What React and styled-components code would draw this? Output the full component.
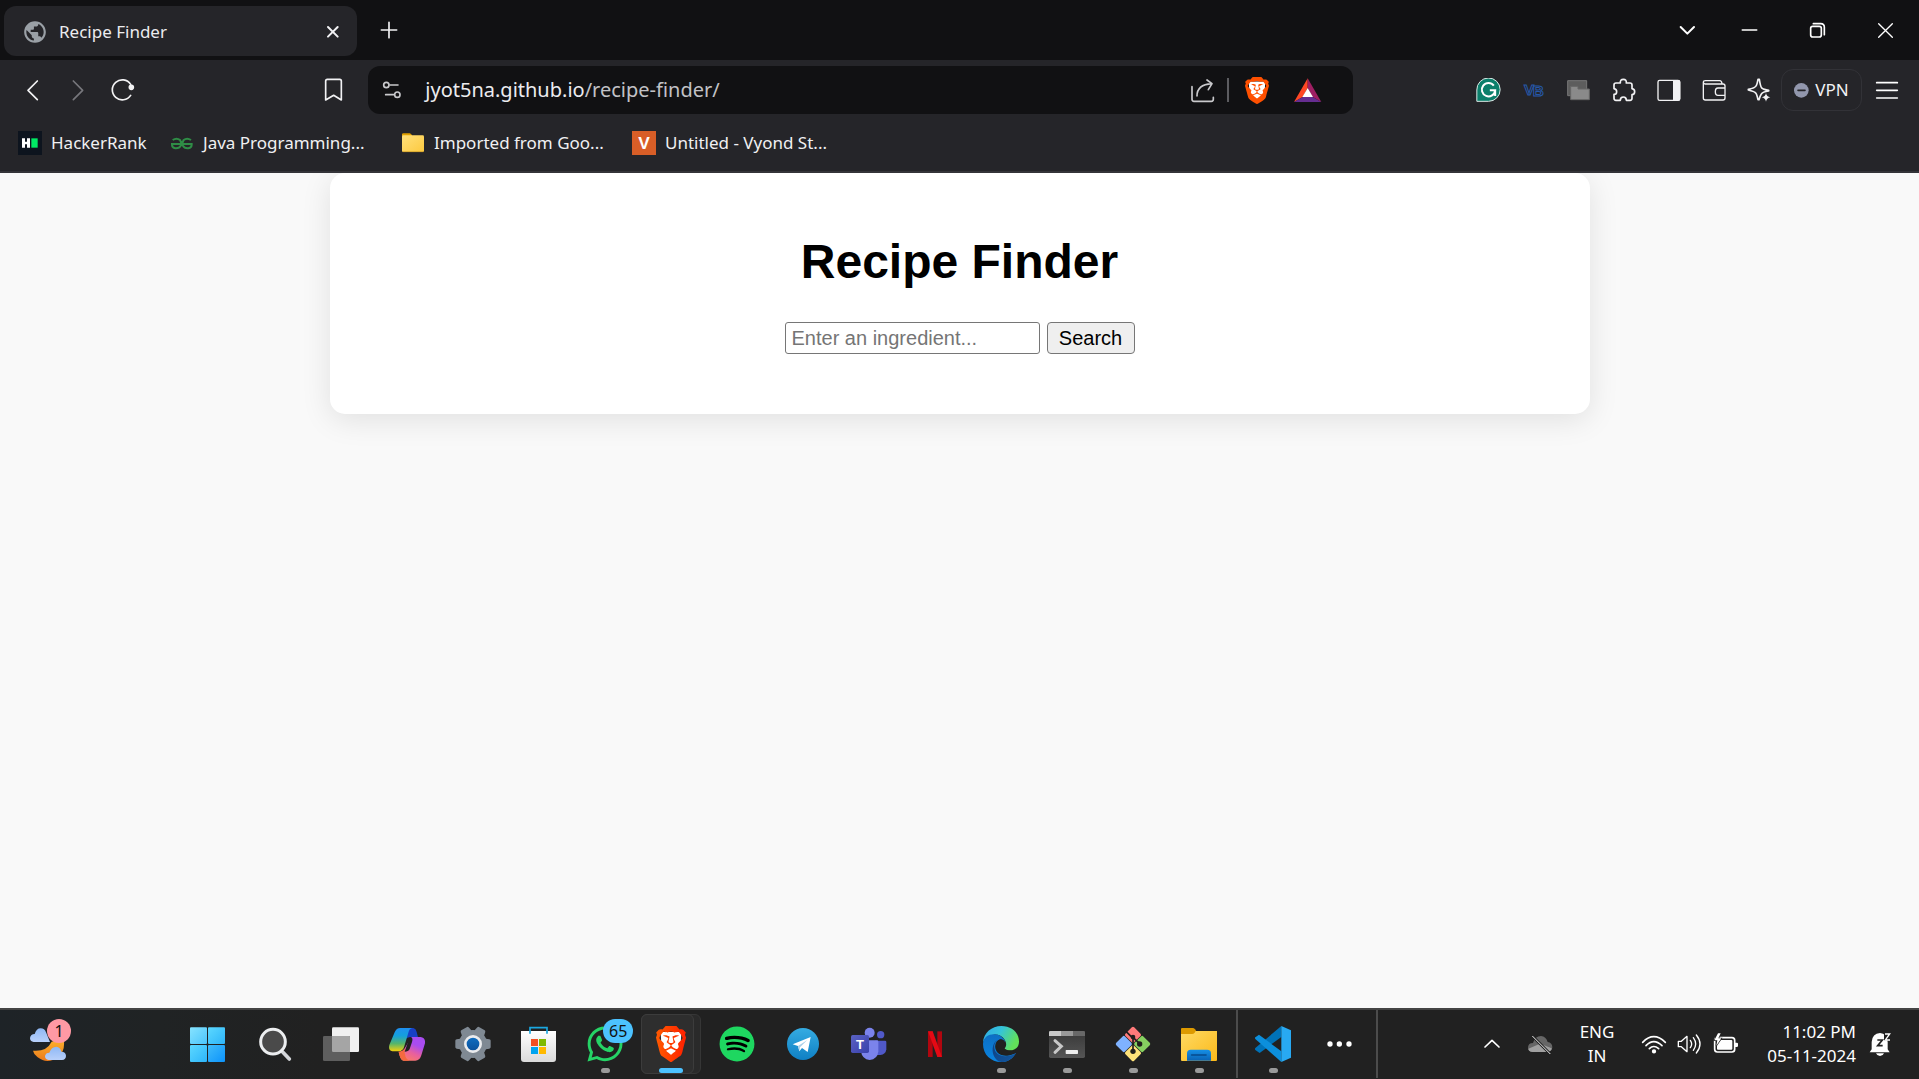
import React from "react";
import styled, { createGlobalStyle, css } from "styled-components";
import { MdPublic } from "react-icons/md";
import { SiBrave } from "react-icons/si";
import { FaSpotify, FaWhatsapp } from "react-icons/fa";

const ui = `"Noto Sans", "Open Sans", sans-serif`;
const arial = `"Liberation Sans", Arial, sans-serif`;

const GlobalStyle = createGlobalStyle`
  *, *::before, *::after { box-sizing: border-box; }
  body { margin: 0; background: #f9f9f9; }
  button, input { font: inherit; margin: 0; }
  svg { display: block; flex: none; }
`;

const Screen = styled.div`
  display: flex;
  flex-direction: column;
  min-height: 100vh;
  font-family: ${ui};
`;

const Plain = css`
  border: 0;
  padding: 0;
  background: none;
  color: #f2f2f4;
  display: flex;
  align-items: center;
  justify-content: center;
  flex: none;
`;

/* ---------- browser chrome ---------- */

const TabStrip = styled.div`
  display: flex;
  height: 60px;
  padding: 6px 0 4px 4px;
  background: #111113;
`;

const Tab = styled.div`
  display: flex;
  align-items: center;
  gap: 13px;
  width: 353px;
  padding: 1px 12px 0 20px;
  border-radius: 12px;
  background: #252529;
  color: #ececef;
  font-size: 17px;
  line-height: 24px;
`;

const TabTitle = styled.span`
  flex: 1;
  white-space: nowrap;
`;

const SlotButton = styled.button`
  ${Plain}
  width: ${(p) => p.$w || 45}px;
  height: ${(p) => p.$h || 48}px;
`;

const Push = styled.div`
  flex: ${(p) => p.$grow || 1};
`;

const Toolbar = styled.div`
  display: flex;
  align-items: center;
  height: 60px;
  padding: 0 8px 0 10px;
  background: #252529;
`;

const AddressBar = styled.div`
  display: flex;
  align-items: center;
  flex: 962;
  height: 48px;
  margin-left: 12px;
  padding-right: 21px;
  border-radius: 12px;
  background: #111113;
`;

const Address = styled.a`
  flex: 1;
  margin-left: 9px;
  color: #c2c2c6;
  font-size: 20px;
  line-height: 26px;
  text-decoration: none;
  white-space: nowrap;
`;

const Host = styled.span`
  color: #ececef;
`;

const BarDivider = styled.div`
  width: 2px;
  height: 24px;
  background: #5c5c60;
`;

const VpnButton = styled.button`
  ${Plain}
  gap: 6px;
  width: 81px;
  height: 42px;
  border: 1px solid #323237;
  border-radius: 12px;
  font-size: 17px;
  line-height: 24px;
`;

const Bookmarks = styled.nav`
  display: flex;
  gap: 23px;
  height: 53px;
  padding: 11px 18px 0;
  border-bottom: 2px solid #343439;
  background: #252529;
`;

const Bookmark = styled.a`
  display: flex;
  align-items: center;
  gap: 9px;
  height: 24px;
  width: ${(p) => (p.$wide ? 208 : 129)}px;
  color: #f0f0f2;
  font-size: 17px;
  line-height: 24px;
  text-decoration: none;
  white-space: nowrap;
`;

/* ---------- page ---------- */

const Page = styled.main`
  flex: 1;
  overflow: hidden;
  background: #f9f9f9;
  font-family: ${arial};
`;

const Card = styled.section`
  max-width: 1260px;
  margin: 0 auto;
  padding: 30px 30px 60px;
  border-radius: 15px;
  background: #fff;
  box-shadow: 0 6px 30px rgba(0, 0, 0, 0.1);
  text-align: center;
`;

const Title = styled.h1`
  margin: 31px 0 33px;
  color: #000;
  font-size: 48px;
  font-weight: 700;
  line-height: 55px;
`;

const SearchForm = styled.form`
  display: flex;
  justify-content: center;
  gap: 7px;
`;

const SearchInput = styled.input`
  width: 255px;
  height: 32px;
  padding: 0 6px;
  border: 1px solid #767676;
  border-radius: 3px;
  background: #fff;
  font-size: 20px;
  &::placeholder { color: #757575; opacity: 1; }
`;

const SearchButton = styled.button`
  width: 88px;
  height: 32px;
  padding: 0;
  border: 1px solid #767676;
  border-radius: 4px;
  background: #efefef;
  color: #000;
  font-size: 20px;
`;

/* ---------- taskbar ---------- */

const Taskbar = styled.footer`
  display: flex;
  align-items: stretch;
  height: 71px;
  padding: 0 15px 1px 0;
  border-top: 2px solid #444;
  background: linear-gradient(90deg, #1e2327 0, #202324 160px, #212121 320px);
`;

const TaskButton = styled.button`
  ${Plain}
  position: relative;
  width: ${(p) => p.$w || 66}px;
`;

const Weather = styled(TaskButton)`
  justify-content: flex-start;
  padding-left: 30px;
  width: 172px;
`;

const ActiveTile = styled.span`
  position: relative;
  display: flex;
  align-items: center;
  justify-content: center;
  width: 60px;
  height: 60px;
  border: 1px solid #363636;
  border-radius: 6px;
  background: #2a2a2a;

  &::before {
    content: "";
    position: absolute;
    inset: -1px 6px -1px -1px;
    border: 1px solid #3c3c3c;
    border-radius: 6px;
    background: #2e2e2e;
  }

  svg { position: relative; }
`;

const Running = styled.i`
  position: absolute;
  bottom: 5px;
  left: 50%;
  width: ${(p) => (p.$active ? 24 : 9)}px;
  height: 5px;
  margin-left: ${(p) => (p.$active ? -12 : -4)}px;
  border-radius: 3px;
  background: ${(p) => (p.$active ? "#4cc2ff" : "#9a9a9a")};
`;

const Badge = styled.span`
  position: absolute;
  top: 9px;
  left: ${(p) => p.$left}px;
  min-width: 24px;
  padding: 0 6px;
  border-radius: 12px;
  background: ${(p) => p.$bg};
  color: #111;
  font-size: 16px;
  line-height: 24px;
`;

const TaskDivider = styled.div`
  width: 2px;
  margin: 0 2px 0 4px;
  background: #4c4c4c;
`;

const TrayText = styled.button`
  ${Plain}
  flex-direction: column;
  align-items: ${(p) => (p.$end ? "flex-end" : "center")};
  width: ${(p) => p.$w}px;
  color: #fff;
  font-size: 17px;
  line-height: 24px;
  white-space: nowrap;
`;

/* ---------- drawings ---------- */

/* The drawings use a grid three times finer than the screen. */
const Draw = ({ box, children, ...rest }) => {
  const [, , w, h] = box;
  return (
    <svg width={Math.round(w / 3)} height={Math.round(h / 3)} viewBox={box.join(" ")} fill="none" aria-hidden="true" {...rest}>
      {children}
    </svg>
  );
};

const Line = ({ box, d, w = 5, c = "#f2f2f4", children }) => (
  <Draw box={box} stroke={c} strokeWidth={w} strokeLinecap="round" strokeLinejoin="round">
    <path d={d} />
    {children}
  </Draw>
);

const Gradient = ({ id, stops, x2 = 0, y2 = 1 }) => (
  <linearGradient id={id} x1="0" y1="0" x2={x2} y2={y2}>
    {stops.map((s, i) => (
      <stop key={i} offset={i / (stops.length - 1)} stopColor={s} />
    ))}
  </linearGradient>
);

const BraveLion = ({ size, width, id, colors }) => (
  <svg width={width} height={size} viewBox="1.8 0 20.4 24" preserveAspectRatio="none" aria-hidden="true">
    <defs><Gradient id={id} stops={colors} x2={1} y2={0} /></defs>
    <path d="M5 4 L19 4 L18.5 14 L12 20 L5.500 14Z" fill="#fff" />
    <SiBrave x="0" y="0" size={24} style={{ fill: `url(#${id})` }} />
  </svg>
);

const HackerRankIcon = () => (
  <Draw box={[54, 393, 72, 72]}>
    <path d="M54 393h72v72H54z" fill="#0d141e" />
    <path d="M66 415h9v10h6v-10h9v28h-9v-10h-6v10h-9z" fill="#fff" />
    <path d="M94 415h19v28H94z" fill="#00ea64" />
  </Draw>
);

const GeeksIcon = () => (
  <Draw box={[510, 393, 72, 72]} stroke="#2f8d46" strokeWidth="6">
    <path d="M513 432H578M518 420Q530 412 540 420Q545 426 543 436Q538 446 526 445Q516 443 516 434M573 420Q561 412 551 420Q546 426 548 436Q553 446 565 445Q575 443 575 434" />
  </Draw>
);

const FolderIcon = () => (
  <Draw box={[1203, 393, 72, 72]}>
    <defs><Gradient id="folder" stops={["#ffe07a", "#fcc93f"]} x2={1} /></defs>
    <path d="M1206 402q1-2 4-2h20l6 5v10h-30z" fill="#e0a000" />
    <rect x="1206" y="406" width="66" height="50" rx="4" fill="url(#folder)" />
    <path d="M1208 455h62" stroke="#c79520" strokeWidth="2" />
  </Draw>
);

const VyondIcon = () => (
  <Draw box={[0, 0, 72, 72]}>
    <path d="M0 0h72v72H0z" fill="#d85e27" />
    <text x="36" y="54" textAnchor="middle" fontFamily="Liberation Sans Narrow, Liberation Sans, Arial, sans-serif" fontWeight="700" fontSize="52" fill="#fff">V</text>
  </Draw>
);

const GrammarlyIcon = () => (
  <Draw box={[107, 234, 74, 72]}>
    <path d="M109 304V270a35 35 0 1 1 35 34z" fill="#0b7f6b" stroke="#dce9e6" strokeWidth="3" />
    <path d="M160 257a20 20 0 1 0 4 14h-16M164 271v17" stroke="#fff" strokeWidth="6" />
  </Draw>
);

const VbIcon = () => (
  <Draw box={[246, 240, 66, 60]}>
    <g fontFamily="Liberation Sans, Arial, sans-serif" fontWeight="700" fontSize="46" fill="none" stroke="#2558a8" strokeWidth="3">
      <text x="249" y="285">V</text>
      <text x="275" y="289">B</text>
    </g>
  </Draw>
);

const StackIcon = () => (
  <Draw box={[379, 240, 72, 63]}>
    <path d="M381 242h57v45h-57z" fill="#5d5d5d" stroke="#777" strokeWidth="3" />
    <path d="M390 259h22v8h34v32h-56z" fill="#8a8a8a" stroke="#666" strokeWidth="3" />
  </Draw>
);

const BatIcon = () => (
  <Draw box={[432, 81, 84, 75]}>
    <path d="M473 82L432 153l26-15 15-27z" fill="#ff4724" />
    <path d="M473 82l41 71-26-15-15-27z" fill="#9e1f63" />
    <path d="M432 153h82l-26-15h-30z" fill="#662d91" />
    <path d="M473 111l16 27h-32z" fill="#fff" />
  </Draw>
);

const WeatherIcon = () => (
  <Draw box={[90, 75, 108, 105]}>
    <defs>
      <Gradient id="moon" stops={["#ffb52e", "#ea7a1b"]} />
      <Gradient id="cloud" stops={["#8fb8f5", "#b8d0fa"]} />
    </defs>
    <path d="M99 146q40 4 56-27l36-10q6 38-16 55-32 25-62 2-12-9-14-20z" fill="url(#moon)" />
    <path d="M101 120q-11-1-11-12 2-12 14-12 5-17 18-17 12 0 16 12l12 29z" fill="url(#cloud)" />
    <path d="M146 174q-11-1-11-12 2-10 13-10 6-18 21-18 12 1 15 15 13 0 14 12 0 12-12 13z" fill="url(#cloud)" />
  </Draw>
);

const StartIcon = () => (
  <Draw box={[570, 81, 105, 105]}>
    <defs><Gradient id="s1" stops={["#86e3ff", "#4cc5fb"]} x2={1} /><Gradient id="s2" stops={["#5cd8ff", "#2db5fa"]} x2={1} /><Gradient id="s3" stops={["#3fbcfa", "#0c93fb"]} x2={1} /></defs>
    <rect x="570" y="82" width="51" height="50" rx="3" fill="url(#s1)" />
    <rect x="624" y="82" width="51" height="50" rx="3" fill="url(#s2)" />
    <rect x="570" y="135" width="51" height="51" rx="3" fill="url(#s2)" />
    <rect x="624" y="135" width="51" height="51" rx="3" fill="url(#s3)" />
  </Draw>
);

const SearchIcon = () => (
  <Draw box={[774, 81, 102, 105]}>
    <path d="M848 156l20 21" stroke="#d4d6da" strokeWidth="11" strokeLinecap="round" />
    <circle cx="819" cy="125" r="37" fill="#4a4a4a" stroke="#eceef0" strokeWidth="9" />
  </Draw>
);

const TaskViewIcon = () => (
  <Draw box={[969, 81, 108, 105]}>
    <rect x="996" y="82" width="81" height="74" rx="4" fill="#f0f0f0" />
    <rect x="969" y="108" width="81" height="75" rx="4" fill="#5e5e5e" />
    <path d="M996 108h50q4 0 4 4v44h-50q-4 0-4-4z" fill="#a5a5a5" />
  </Draw>
);

const CopilotIcon = () => (
  <Draw box={[57, 78, 108, 105]}>
    <defs>
      <Gradient id="c1" stops={["#1f8ff0", "#14a0dc", "#55b56b", "#f5d00c"]} />
      <Gradient id="c2" stops={["#a94cf0", "#e8609d", "#fb7a68", "#fba44e"]} x2={-0.5} />
      <Gradient id="c3" stops={["#1740c4", "#1f75e6"]} x2={-1} y2={0} />
    </defs>
    <path d="M108 81h22q8 2 10 12l4 16h-26q-12 2-16 12z" fill="url(#c3)" />
    <path d="M116 81H91q-12 0-17 13l-16 38q-4 16 9 19h20q11-1 15-12l13-44q3-13 12-14z" fill="url(#c1)" />
    <path d="M125 108h27q15 2 13 19l-11 36q-5 16-18 16h-36q-10-2-14-27h4q12-2 16-13z" fill="url(#c2)" />
    <path d="M86 152h4q10-1 14-10-2 32 14 37h-16q-12-2-16-27z" fill="#f4693f" />
    <path d="M119 109q12-1 7 14l-7 21q-4 8-15 8z" fill="#212121" />
  </Draw>
);

const SettingsIcon = () => (
  <Draw box={[255, 78, 108, 108]}>
    <defs><Gradient id="hub" stops={["#0f70c4", "#0a4f99"]} /></defs>
    <g fill="#7f8993">
      <circle cx="309" cy="132" r="42" />
      {[0, 60, 120].map((a) => (
        <path key={a} d="M256 122q0-3 4-4l10-2h78l10 2q4 1 4 4v20q0 3-4 4l-10 2h-78l-10-2q-4-1-4-4z" transform={`rotate(${a} 309 132)`} />
      ))}
    </g>
    <circle cx="309" cy="132" r="23" fill="url(#hub)" stroke="#ebecee" strokeWidth="8" />
  </Draw>
);

const StoreIcon = () => (
  <Draw box={[453, 78, 108, 108]}>
    <defs><Gradient id="bag" stops={["#ffffff", "#dadada"]} /></defs>
    <path d="M453 93h105v84q0 9-9 9h-87q-9 0-9-9z" fill="url(#bag)" />
    <path d="M480 101V83h51v18" stroke="#1ba7e0" strokeWidth="5" />
    <path d="M483 117h21v21h-21z" fill="#f25022" />
    <path d="M507 117h21v21h-21z" fill="#7fba00" />
    <path d="M483 141h21v21h-21z" fill="#00a4ef" />
    <path d="M507 141h21v21h-21z" fill="#ffb900" />
  </Draw>
);

const SpotifyIcon = () => (
  <svg width="36" height="36" viewBox="0 0 36 36" aria-hidden="true">
    <circle cx="18" cy="18" r="17" fill="#000" />
    <FaSpotify size={36} color="#1ed760" />
  </svg>
);

const TelegramIcon = () => (
  <Draw box={[81, 84, 96, 96]}>
    <defs><Gradient id="tg" stops={["#35ace2", "#0f80c4"]} /></defs>
    <circle cx="129" cy="132" r="48" fill="url(#tg)" />
    <path d="M98 133l54-22-9 45-17-12-8 10-4-16z" fill="#fff" />
    <path d="M114 138l28-18-22 22-2 12z" fill="#a9cfe8" />
  </Draw>
);

const TeamsIcon = () => (
  <Draw box={[273, 81, 108, 102]}>
    <defs><Gradient id="tm" stops={["#5a62c3", "#3940ab"]} x2={1} /></defs>
    <circle cx="362" cy="104" r="11" fill="#5059c9" />
    <path d="M345 122h30q4 0 4 4v22q-2 16-18 17h-16z" fill="#5059c9" />
    <circle cx="329" cy="98" r="15" fill="#7b83eb" />
    <path d="M303 121h48q4 0 4 4v29q-2 24-26 26-23-2-26-26z" fill="#7b83eb" />
    <rect x="273" y="105" width="54" height="54" rx="5" fill="url(#tm)" />
    <text x="300" y="146" textAnchor="middle" fontFamily="Liberation Sans, Arial, sans-serif" fontWeight="700" fontSize="39" fill="#fff">T</text>
  </Draw>
);

const NetflixIcon = () => (
  <Draw box={[504, 93, 42, 78]}>
    <rect x="504" y="94" width="14" height="77" fill="#b1060f" />
    <rect x="532" y="94" width="14" height="77" fill="#b1060f" />
    <path d="M504 94h14l28 77h-14z" fill="#e50914" />
  </Draw>
);

const EdgeIcon = () => (
  <Draw box={[669, 78, 108, 108]}>
    <defs>
      <Gradient id="e1" stops={["#2fa8e8", "#35c4d8", "#62e05a"]} x2={1} y2={0.4} />
      <Gradient id="e2" stops={["#0d6fc4", "#0a84e0"]} />
      <Gradient id="e3" stops={["#0d3f80", "#1357a0"]} x2={1} />
    </defs>
    <path d="M669 128C671 98 695 78 724 78c32 0 53 21 53 47 0 17-13 26-27 26-10 0-17-3-16-6 6-7 6-15 0-26-8-12-20-16-32-15-16 1-28 9-33 24z" fill="url(#e1)" />
    <path d="M669 132c1-20 16-29 33-29 17 0 30 10 34 24-4-6-9-9-14-9-11 1-18 13-16 27 4 18 22 24 36 22 12-2 18-5 26-9-8 17-25 28-45 28-30 0-54-22-54-54z" fill="url(#e2)" />
    <path d="M712 121c-7 5-11 13-9 24 3 18 22 26 38 23 12-1 20-5 27-10-9 17-25 28-44 28-17-2-28-22-26-41 1-11 6-20 14-24z" fill="url(#e3)" />
    <path d="M714 122c8-6 19-4 20 7 1 9-5 12 0 17 7 6 20 8 33 4l1 8c-10 5-22 8-32 6-21-4-32-27-22-42z" fill="#212121" />
  </Draw>
);

const TerminalIcon = () => (
  <Draw box={[867, 90, 108, 81]}>
    <defs><Gradient id="term" stops={["#383838", "#555"]} /></defs>
    <rect x="867" y="90" width="108" height="81" rx="5" fill="url(#term)" />
    <path d="M867 105V94q0-4 4-4h32v15z" fill="#cacaca" />
    <path d="M903 90h36v15h-36z" fill="#999" />
    <path d="M939 90h32q4 0 4 4v11h-36z" fill="#686868" />
    <path d="M885 119l19 17-19 18" stroke="#c8c8c8" strokeWidth="9" strokeLinecap="round" />
    <rect x="917" y="147" width="37" height="12" rx="2" fill="#eee" />
  </Draw>
);

const GitIcon = () => (
  <Draw box={[1065, 78, 108, 108]}>
    <g transform="rotate(45 1119 132)">
      <rect x="1081" y="94" width="37" height="37" rx="5" fill="#ff7a7a" />
      <rect x="1120" y="94" width="37" height="37" rx="5" fill="#86d060" />
      <rect x="1081" y="133" width="37" height="37" rx="5" fill="#7fb2ff" />
      <rect x="1120" y="133" width="37" height="37" rx="5" fill="#ffe27a" />
    </g>
    <path d="M1098 94l21 21v39M1119 112l20 19" stroke="#211f1d" strokeWidth="5" />
    <g fill="#211f1d"><circle cx="1119" cy="111" r="7" /><circle cx="1119" cy="154" r="8" /><circle cx="1139" cy="132" r="8" /></g>
  </Draw>
);

const ExplorerIcon = () => (
  <Draw box={[93, 84, 108, 99]}>
    <defs><Gradient id="ex" stops={["#ffda63", "#fbb91a"]} x2={1} /><Gradient id="eb" stops={["#1690e6", "#0a63b5"]} /></defs>
    <path d="M93 87q0-3 3-3h32q4 0 7 4l4 6v14H93z" fill="#dd9a00" />
    <path d="M93 102h33q5 0 8-4l3-5h64v87q0 3-3 3H96q-3 0-3-3z" fill="url(#ex)" />
    <path d="M111 182v-22q0-11 11-11h50q11 0 11 11v22z" fill="url(#eb)" />
    <path d="M125 165h43" stroke="#064a8c" strokeWidth="5" strokeLinecap="round" />
  </Draw>
);

const CodeIcon = () => (
  <Draw box={[315, 78, 108, 108]}>
    <path d="M394 78v33l-65 48-13-9q-2-3 0-6z" fill="#0072b8" />
    <path d="M327 104l67 50v32l-78-69q-2-3 0-5z" fill="#0c8fdc" />
    <path d="M394 78l29 13v82l-29 13z" fill="#28a9f2" />
  </Draw>
);

const CloudOffIcon = () => (
  <Draw box={[21, 102, 78, 63]}>
    <path d="M38 156q-14-1-14-14 1-13 15-13 6-21 24-21 15 1 20 18 14 2 14 16-1 13-14 14z" fill="#666" />
    <path d="M38 156q-13-1-13-10l35-15 35 14q-1 10-12 11z" fill="#a0a0a0" />
    <path d="M37 108l54 54" stroke="#212121" strokeWidth="8" />
    <path d="M37 108l54 54" stroke="#eee" strokeWidth="3" />
  </Draw>
);

const WifiIcon = () => (
  <Line box={[363, 99, 78, 63]} c="#fff" d="M368 124q33-34 68 0M378 134q23-24 48 0M388 143q13-13 28 0">
    <circle cx="402" cy="151" r="4" fill="#fff" />
  </Line>
);

const SpeakerIcon = () => (
  <Line box={[472, 99, 78, 66]} c="#fff" w={4} d="M476 124h9l17-15v46l-17-15h-9zM512 121q8 11 0 22M521 113q14 19 0 38M530 105q22 27 0 54" />
);

const BatteryIcon = () => (
  <Draw box={[580, 93, 78, 72]}>
    <rect x="585" y="110" width="60" height="43" rx="8" stroke="#fff" strokeWidth="5" />
    <rect x="592" y="117" width="46" height="29" rx="3" fill="#fff" />
    <path d="M646 125h5q4 0 4 3v7q0 3-4 3h-5z" fill="#fff" />
    <path d="M595 97l-11 21h9l-3 16 15-22h-9l7-15z" fill="#fff" stroke="#212121" strokeWidth="4" paintOrder="stroke" />
  </Draw>
);

const BellIcon = () => (
  <Draw box={[1045, 96, 69, 75]}>
    <path d="M1053 148v-22q2-26 25-27 21 1 23 27v22l6 9h-60z" fill="#fff" />
    <path d="M1066 160h24q-3 8-12 8t-12-8z" fill="#fff" />
    <path d="M1090 99h18v22h-18z" fill="#212121" />
    <path d="M1070 120h15l-14 17h15" stroke="#212121" strokeWidth="5" />
    <path d="M1093 102h14l-13 18h14" stroke="#fff" strokeWidth="4" />
  </Draw>
);

const extensions = [
  ["Grammarly", <GrammarlyIcon />],
  ["VB", <VbIcon />],
  ["Windows", <StackIcon />],
  ["Extensions", <Line box={[512, 235, 72, 72]} d="M518 256q0-6 6-6h13q-1-11 9-11 10 0 9 11h11q6 0 6 6v11q8 1 8 9 0 8-8 9v11q0 6-6 6h-11q0-10-9-10-9 0-9 10h-13q-6 0-6-6v-12q8 0 8-8 0-8-8-9z" w={5} />],
  ["Sidebar", <Draw box={[649, 237, 72, 66]}><rect x="652" y="241" width="65" height="60" rx="5" stroke="#f2f2f4" strokeWidth="4" /><path d="M697 240h17q5 0 5 5v52q0 5-5 5h-17z" fill="#f2f2f4" /></Draw>],
  ["Wallet", <Line box={[784, 237, 72, 66]} w={4} d="M788 246v48q0 6 6 6h53q6 0 6-6v-36q0-6-6-6h-54q-5-1-5-6 0-4 6-4h43q6 0 7 9M853 264h-21q-8 0-8 11t8 11h21" />],
  ["Leo", <Draw box={[920, 235, 72, 72]}><path d="M953 239l4 0q4 26 9 27 3 3 19 6v2q-18 2-22 9-3 4-7 17h-3q-4-19-8-21-4-4-21-8v-2q20-4 23-10 3-4 6-20z" stroke="#f2f2f4" strokeWidth="5" strokeLinejoin="round" /><path d="M977 280q2 11 13 13-11 2-13 13-2-11-13-13 11-2 13-13z" fill="#f2f2f4" stroke="#252529" strokeWidth="3" paintOrder="stroke" /></Draw>],
];

const tasks = [
  ["Search", <SearchIcon />],
  ["Task view", <TaskViewIcon />],
  ["Copilot", <CopilotIcon />],
  ["Settings", <SettingsIcon />],
  ["Store", <StoreIcon />],
  ["WhatsApp", <><FaWhatsapp size={40} color="#25d366" /><Badge $left={31} $bg="#4cc2ff">65</Badge></>, true],
  ["Brave", <><ActiveTile><BraveLion size={36} width={30} id="lionTask" colors={["#ff5a00", "#ff2000"]} /></ActiveTile><Running $active /></>],
  ["Spotify", <SpotifyIcon />],
  ["Telegram", <TelegramIcon />],
  ["Teams", <TeamsIcon />],
  ["Netflix", <NetflixIcon />],
  ["Edge", <EdgeIcon />, true],
  ["Terminal", <TerminalIcon />, true],
  ["Git", <GitIcon />, true],
  ["File Explorer", <ExplorerIcon />, true],
];

export default function App() {
  return (
    <Screen>
      <GlobalStyle />

      <TabStrip>
        <Tab>
          <MdPublic size={26} color="#9aa0a6" style={{ margin: -2 }} />
          <TabTitle>Recipe Finder</TabTitle>
          <SlotButton $w={24} $h={24} aria-label="Close tab">
            <Line box={[978, 75, 42, 42]} d="M984 81l29 29M1013 81l-29 29" w={6} />
          </SlotButton>
        </Tab>
        <SlotButton $w={64} aria-label="New tab">
          <Line box={[0, 0, 54, 54]} d="M27 4v46M4 27h46" w={5} />
        </SlotButton>
        <Push />
        <SlotButton $w={56} aria-label="Tab list">
          <Line box={[717, 72, 51, 36]} d="M722 81l20 20 20-20" w={6} c="#fff" />
        </SlotButton>
        <SlotButton $w={68} aria-label="Minimize">
          <Line box={[900, 81, 51, 12]} d="M904 87h43" w={5} c="#fff" />
        </SlotButton>
        <SlotButton $w={68} aria-label="Restore">
          <Line box={[1104, 63, 51, 51]} d="M1115 76h20q6 0 6 6v20q0 6-6 6h-20q-6 0-6-6V82q0-6 6-6zM1117 68h22q11 0 11 11v22" w={5} c="#fff" />
        </SlotButton>
        <SlotButton $w={68} aria-label="Close window">
          <Line box={[1311, 63, 51, 51]} d="M1316 68l41 41M1357 68l-41 41" w={4} c="#fff" />
        </SlotButton>
      </TabStrip>

      <Toolbar>
        <SlotButton aria-label="Back"><Line box={[78, 236, 42, 69]} d="M112 242l-28 28 28 28" w={5} /></SlotButton>
        <SlotButton aria-label="Forward"><Line box={[213, 236, 42, 69]} d="M220 242l28 28-28 28" w={5} c="#77777c" /></SlotButton>
        <SlotButton aria-label="Reload">
          <Line box={[333, 234, 72, 72]} d="M392 253a30 30 0 1 0 0 33" w={5}><circle cx="394" cy="262" r="6" fill="#f2f2f4" /></Line>
        </SlotButton>
        <Push $grow={166} />
        <SlotButton aria-label="Bookmark this page">
          <Line box={[975, 234, 57, 72]} d="M980 300v-57q0-5 5-5h37q5 0 5 5v57l-23-14z" w={5} />
        </SlotButton>
        <AddressBar>
          <SlotButton $w={48} aria-label="Site information">
            <Line box={[1149, 240, 60, 60]} d="M1173 255h24M1160 284h24" w={5} c="#c9c9cc">
              <circle cx="1162" cy="255" r="8" /><circle cx="1195" cy="284" r="8" />
            </Line>
          </SlotButton>
          <Address href="#"><Host>jyot5na.github.io</Host>/recipe-finder/</Address>
          <SlotButton $w={49} aria-label="Share">
            <Line box={[121, 84, 75, 75]} d="M127 110v38q0 6 6 6h52q6 0 6-6v-6M142 138q0-34 44-37M172 90l15 11-11 18" w={5} c="#c9c9cc" />
          </SlotButton>
          <BarDivider />
          <SlotButton $w={56} aria-label="Shields">
            <BraveLion size={27} width={24} id="lionBar" colors={["#ff5000", "#ff5000"]} />
          </SlotButton>
          <SlotButton $w={47} aria-label="Rewards"><BatIcon /></SlotButton>
        </AddressBar>
        <Push $grow={113} />
        {extensions.map(([name, icon]) => (
          <SlotButton key={name} aria-label={name}>{icon}</SlotButton>
        ))}
        <VpnButton>
          <Draw box={[0, 0, 45, 45]}><circle cx="22" cy="22" r="22" fill="#9297ad" /><path d="M12 22h21" stroke="#252529" strokeWidth="5" strokeLinecap="round" /></Draw>
          VPN
        </VpnButton>
        <SlotButton $w={49} aria-label="Menu"><Line box={[1305, 243, 72, 57]} d="M1310 248h62M1310 271h62M1310 294h62" w={5} c="#fff" /></SlotButton>
      </Toolbar>

      <Bookmarks>
        <Bookmark href="#"><HackerRankIcon />HackerRank</Bookmark>
        <Bookmark href="#" $wide><GeeksIcon />Java Programming...</Bookmark>
        <Bookmark href="#" $wide><FolderIcon />Imported from Goo...</Bookmark>
        <Bookmark href="#" $wide><VyondIcon />Untitled - Vyond St...</Bookmark>
      </Bookmarks>

      <Page>
        <Card>
          <Title>Recipe Finder</Title>
          <SearchForm onSubmit={(e) => e.preventDefault()}>
            <SearchInput type="text" placeholder="Enter an ingredient..." aria-label="Ingredient" />
            <SearchButton type="submit">Search</SearchButton>
          </SearchForm>
        </Card>
      </Page>

      <Taskbar>
        <Weather aria-label="Weather"><WeatherIcon /><Badge $left={47} $bg="#ff99a4">1</Badge></Weather>
        <TaskButton $w={70} aria-label="Start"><StartIcon /></TaskButton>
        {tasks.map(([name, icon, running]) => (
          <TaskButton key={name} aria-label={name}>{icon}{running && <Running />}</TaskButton>
        ))}
        <TaskDivider />
        <TaskButton aria-label="Visual Studio Code"><CodeIcon /><Running /></TaskButton>
        <TaskButton aria-label="More apps">
          <Draw box={[0, 0, 75, 18]} style={{ fill: "#fff" }}><circle cx="9" cy="9" r="8" /><circle cx="37" cy="9" r="8" /><circle cx="66" cy="9" r="8" /></Draw>
        </TaskButton>
        <TaskDivider />
        <Push />
        <TaskButton $w={48} aria-label="Hidden icons"><Line box={[996, 114, 54, 36]} d="M1002 141l21-20 21 20" w={5} c="#fff" /></TaskButton>
        <TaskButton $w={48} aria-label="OneDrive"><CloudOffIcon /></TaskButton>
        <TrayText $w={66}><span>ENG</span><span>IN</span></TrayText>
        <TaskButton $w={48} aria-label="Network"><WifiIcon /></TaskButton>
        <TaskButton $w={24} aria-label="Volume"><SpeakerIcon /></TaskButton>
        <TaskButton $w={48} aria-label="Battery"><BatteryIcon /></TaskButton>
        <TrayText $w={106} $end><span>11:02 PM</span><span>05-11-2024</span></TrayText>
        <TaskButton $w={48} aria-label="Notifications"><BellIcon /></TaskButton>
      </Taskbar>
    </Screen>
  );
}
